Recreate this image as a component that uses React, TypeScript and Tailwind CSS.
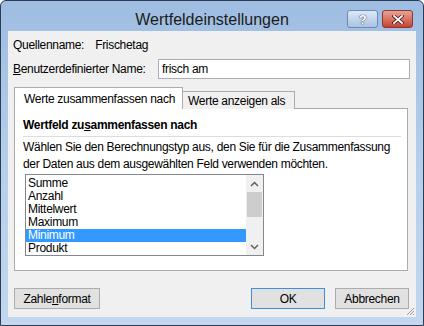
import React from "react";

const items = ["Summe", "Anzahl", "Mittelwert", "Maximum", "Minimum", "Produkt"];

const TitleButtons = () => (
  <div className="absolute right-[10px] top-[9px] flex gap-[4px]">
    <div className="w-[31px] h-[18px] rounded-[3px] border border-[#6d8bb0] bg-gradient-to-b from-[#dce8f6] to-[#a9c3e2] flex items-center justify-center">
      <span className="text-[13px] font-bold leading-none text-white [text-shadow:0_0_1px_#2a3f5f,0_0_1px_#2a3f5f]">?</span>
    </div>
    <div className="w-[31px] h-[18px] rounded-[3px] border border-[#8a3a32] bg-gradient-to-b from-[#e8a293] to-[#c6412f] flex items-center justify-center">
      <svg width="12" height="9" viewBox="0 0 12 9">
        <path d="M2 1 L10 8 M10 1 L2 8" stroke="#3a1410" strokeWidth="3.2" strokeLinecap="square" />
        <path d="M2 1 L10 8 M10 1 L2 8" stroke="#ffffff" strokeWidth="1.8" strokeLinecap="square" />
      </svg>
    </div>
  </div>
);

const ListBox = () => (
  <div className="ml-[10px] mt-[1px] w-[239px] h-[82px] border border-[#828790] bg-white flex">
    <div className="flex-1 pt-[2px]">
      {items.map((it) => (
        <div
          key={it}
          className={
            it === "Minimum"
              ? "h-[13px] leading-[13px] pl-[2px] bg-[#3399ff] text-white"
              : "h-[13px] leading-[13px] pl-[2px] text-black"
          }
        >
          {it}
        </div>
      ))}
    </div>
    <div className="w-[17px] bg-[#f0f0f0] flex flex-col items-center">
      <div className="h-[17px] flex items-center justify-center">
        <svg width="9" height="6" viewBox="0 0 9 6">
          <path d="M1 5 L4.5 1.5 L8 5" stroke="#606060" strokeWidth="1.5" fill="none" />
        </svg>
      </div>
      <div className="w-[15px] h-[25px] bg-[#cdcdcd]" />
      <div className="flex-1" />
      <div className="h-[17px] flex items-center justify-center">
        <svg width="9" height="6" viewBox="0 0 9 6">
          <path d="M1 1 L4.5 4.5 L8 1" stroke="#606060" strokeWidth="1.5" fill="none" />
        </svg>
      </div>
    </div>
  </div>
);

export default function App() {
  return (
    <div className="w-[424px] h-[326px] font-['Liberation_Sans',Arial,sans-serif] text-[12px] tracking-[-0.3px] text-black whitespace-nowrap">
      <div className="relative w-full h-full rounded-t-[6px] border border-[#2c3c52] bg-gradient-to-b from-[#9ebde1] via-[#b5cfeb] to-[#c2d7ef] flex flex-col">
        {/* Title bar */}
        <div className="relative h-[30px] flex items-center justify-center">
          <span className="text-[16px] text-[#1b1b1b] mt-[8px] tracking-[0px]">Wertfeldeinstellungen</span>
          <TitleButtons />
        </div>

        {/* Client */}
        <div className="mx-[7px] h-[286px] bg-[#f0f0f0] flex flex-col">
          <div className="flex items-center mt-[7px] h-[14px] pl-[5px]">
            <span>Quellenname:</span>
            <span className="ml-[11px]">Frischetag</span>
          </div>

          <div className="flex items-center mt-[7px] pl-[5px]">
            <span>
              <span className="underline">B</span>enutzerdefinierter Name:
            </span>
            <div className="ml-[auto] mr-[6px] w-[252px] h-[20px] border border-[#abadb3] bg-white flex items-center pl-[3px]">
              frisch am
            </div>
          </div>

          {/* Tabs */}
          <div className="flex items-end mt-[8px] ml-[6px] h-[22px] relative z-10">
            <div className="w-[169px] h-[22px] border border-b-0 border-[#acacac] bg-white pl-[9px] flex items-center">
              Werte zusammenfassen nach
            </div>
            <div className="w-[112px] h-[18px] border border-l-0 border-b-0 border-[#acacac] bg-[#f0f0f0] pl-[5px] flex items-center">
              Werte anzeigen als
            </div>
          </div>

          {/* Panel */}
          <div className="ml-[6px] mr-[8px] -mt-[1px] h-[163px] border border-[#acacac] bg-white flex flex-col">
            <div className="font-bold mt-[9px] ml-[8px] h-[14px] leading-[14px]">
              Wertfeld zu<span className="underline">s</span>ammenfassen nach
            </div>
            <div className="ml-[8px] mr-[6px] mt-[4px] h-px bg-[#dcdcdc]" />
            <div className="ml-[8px] mt-[2px] leading-[17px]">
              Wählen Sie den Berechnungstyp aus, den Sie für die Zusammenfassung
              <br />
              der Daten aus dem ausgewählten Feld verwenden möchten.
            </div>
            <ListBox />
          </div>

          {/* Buttons */}
          <div className="flex mt-[17px] ml-[6px] mr-[7px]">
            <div className="w-[86px] h-[21px] border border-[#adadad] bg-[#e1e1e1] flex items-center justify-center">
              Zahle<span className="underline">n</span>format
            </div>
            <div className="flex-1" />
            <div className="w-[74px] h-[21px] border border-[#3d8ee0] bg-[#e1e1e1] flex items-center justify-center">
              OK
            </div>
            <div className="w-[74px] h-[21px] ml-[10px] border border-[#adadad] bg-[#e1e1e1] flex items-center justify-center">
              Abbrechen
            </div>
          </div>
          <div className="flex-1 relative">
            <svg className="absolute right-[1px] bottom-[1px]" width="10" height="10" viewBox="0 0 10 10">
              <path d="M9 2 L2 9 M9 5 L5 9 M9 8 L8 9" stroke="#9a9a9a" strokeWidth="1" />
            </svg>
          </div>
        </div>
      </div>
    </div>
  );
}
